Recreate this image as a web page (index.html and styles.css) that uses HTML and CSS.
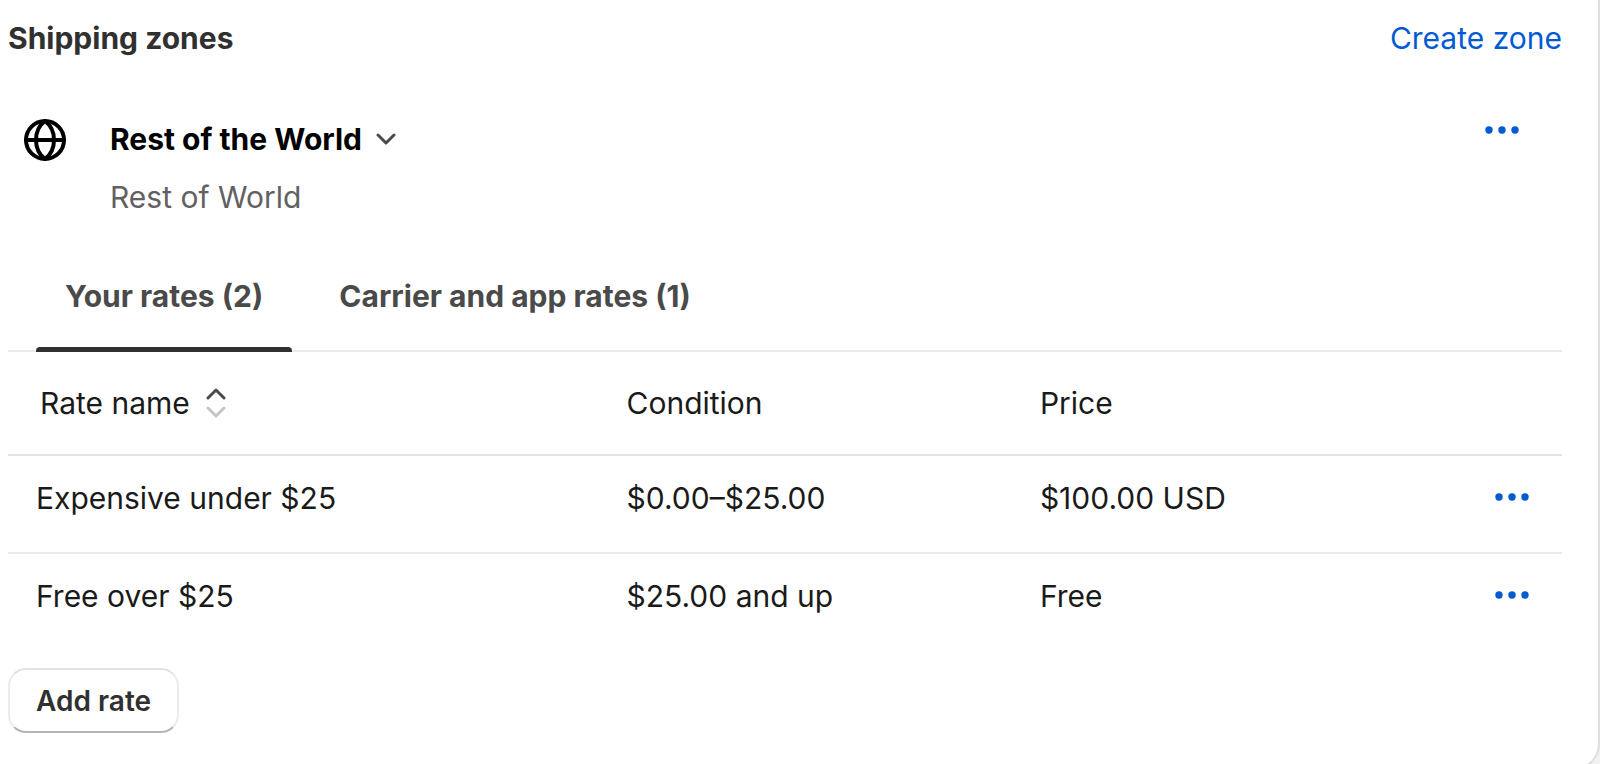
FILE: index.html
```html
<!DOCTYPE html>
<html lang="en">
<head>
    <meta charset="UTF-8">
    <meta name="viewport" content="width=device-width, initial-scale=1.0">
    <title>Shipping zones</title>
    <link rel="stylesheet" href="styles.css">
</head>
<body>
    <main class="card">
        <header class="card-header">
            <h1>Shipping zones</h1>
            <a href="#">Create zone</a>
        </header>

        <section class="zone">
            <svg class="globe" viewBox="0 0 42 42" aria-hidden="true">
                <circle cx="21" cy="21" r="19"/>
                <path d="M21 2C9 11 9 31 21 40C33 31 33 11 21 2z"/>
                <path d="M2 21h38"/>
            </svg>
            <div class="zone-info">
                <button class="zone-name" type="button">
                    Rest of the World
                    <svg class="chevron" viewBox="0 0 20 14" aria-hidden="true"><path d="M2 3l8 8 8-8"/></svg>
                </button>
                <p>Rest of World</p>
            </div>
            <button class="more" type="button" aria-label="Zone actions">
                <svg viewBox="0 0 34 8" aria-hidden="true"><circle cx="4" cy="4" r="3.7"/><circle cx="17" cy="4" r="3.7"/><circle cx="30" cy="4" r="3.7"/></svg>
            </button>
        </section>

        <div class="tabs" role="tablist">
            <button class="tab active" type="button" role="tab" aria-selected="true">Your rates (2)</button>
            <button class="tab" type="button" role="tab" aria-selected="false">Carrier and app rates (1)</button>
        </div>

        <table class="rates">
            <thead>
                <tr>
                    <th class="col-name">
                        <button class="sort" type="button">
                            Rate name
                            <svg viewBox="0 0 20 30" aria-hidden="true"><path class="up" d="M2 10l8-8 8 8"/><path class="down" d="M2 20l8 8 8-8"/></svg>
                        </button>
                    </th>
                    <th class="col-condition">Condition</th>
                    <th class="col-price">Price</th>
                    <td></td>
                </tr>
            </thead>
            <tbody>
                <tr>
                    <td>Expensive under $25</td>
                    <td>$0.00–$25.00</td>
                    <td>$100.00 USD</td>
                    <td class="actions">
                        <button class="more" type="button" aria-label="Actions for Expensive under $25">
                            <svg viewBox="0 0 34 8" aria-hidden="true"><circle cx="4" cy="4" r="3.7"/><circle cx="17" cy="4" r="3.7"/><circle cx="30" cy="4" r="3.7"/></svg>
                        </button>
                    </td>
                </tr>
                <tr>
                    <td>Free over $25</td>
                    <td>$25.00 and up</td>
                    <td>Free</td>
                    <td class="actions">
                        <button class="more" type="button" aria-label="Actions for Free over $25">
                            <svg viewBox="0 0 34 8" aria-hidden="true"><circle cx="4" cy="4" r="3.7"/><circle cx="17" cy="4" r="3.7"/><circle cx="30" cy="4" r="3.7"/></svg>
                        </button>
                    </td>
                </tr>
            </tbody>
        </table>

        <button class="add-rate" type="button">Add rate</button>
    </main>
</body>
</html>
```
FILE: styles.css
```css
* {
    box-sizing: border-box;
}
body {
    margin: 0;
    height: 100vh;
    overflow: hidden;
    background: #f1f1f1;
    color: #1a1a1a;
    font-family: Inter, sans-serif;
    font-size: 30px;
    line-height: 40px;
}
button {
    padding: 0;
    border: none;
    background: none;
    color: inherit;
    font: inherit;
    cursor: pointer;
}
h1, p {
    margin: 0;
}
svg {
    display: block;
    fill: none;
    stroke-linecap: round;
    stroke-linejoin: round;
}
.card {
    min-height: calc(100vh + 4px);
    padding: 18px 36px 32px 8px;
    margin-right: 2px;
    background: #fff;
    border-bottom-right-radius: 24px;
    box-shadow: 2px 0 0 #dedede, 0 2px 0 #b5b5b5;
}
.card-header {
    display: flex;
    justify-content: space-between;
}
h1 {
    color: #303030;
    font-size: 30px;
    font-weight: 650;
}
a {
    color: #005bd3;
    text-decoration: none;
}
.zone {
    display: flex;
    align-items: flex-start;
    margin-top: 61px;
    padding: 0 43px 0 16px;
}
.globe {
    width: 42px;
    height: 42px;
    stroke: #000;
    stroke-width: 4;
}
.zone-info {
    flex: 1;
    margin-left: 44px;
}
.zone-name {
    display: flex;
    align-items: center;
    gap: 14px;
    color: #000;
    font-weight: 650;
}
.chevron {
    width: 20px;
    height: 14px;
    stroke: #4a4a4a;
    stroke-width: 3;
}
.zone-info p {
    margin-top: 18px;
    color: #616161;
}
.more svg {
    width: 34px;
    height: 8px;
    fill: #005bd3;
}
.zone .more {
    padding: 7px 0;
}
.tabs {
    display: flex;
    gap: 18px;
    margin-top: 39px;
    padding: 0 28px;
    border-bottom: 2px solid #ebebeb;
}
.tab {
    position: relative;
    padding: 20px 29px 34px;
    color: #4a4a4a;
    font-weight: 650;
}
.tab.active::after {
    content: "";
    position: absolute;
    left: 0;
    right: 0;
    bottom: -2px;
    height: 5px;
    border-radius: 4px 4px 0 0;
    background: #303030;
}
.rates {
    width: 100%;
    table-layout: fixed;
    border-collapse: separate;
    border-spacing: 0;
}
.rates th,
.rates td {
    padding: 22px 28px 34px;
    font-weight: 400;
    text-align: left;
    vertical-align: top;
}
.rates th,
.rates thead td {
    padding: 31px 28px;
    border-bottom: 2px solid #e3e3e3;
}
.rates tbody tr:first-child td {
    border-bottom: 2px solid #ebebeb;
}
.rates .col-name {
    width: 38%;
    padding-left: 32px;
}
.col-condition {
    width: 26.6%;
}
.col-price {
    width: 23%;
}
.sort {
    display: flex;
    align-items: center;
    gap: 16px;
}
.sort svg {
    width: 20px;
    height: 30px;
    stroke-width: 3;
}
.up {
    stroke: #4a4a4a;
}
.down {
    stroke: #c4c4c4;
}
.rates .actions {
    padding-right: 33px;
}
.actions .more {
    display: block;
    margin-left: auto;
    padding: 15px 0 0;
}
.add-rate {
    margin-top: 18px;
    padding: 11px 26px 10px;
    border: 2px solid #ebebeb;
    border-top-color: #e3e3e3;
    border-bottom-color: #b5b5b5;
    border-radius: 18px;
    color: #303030;
    font-size: 28px;
    font-weight: 600;
}
```
